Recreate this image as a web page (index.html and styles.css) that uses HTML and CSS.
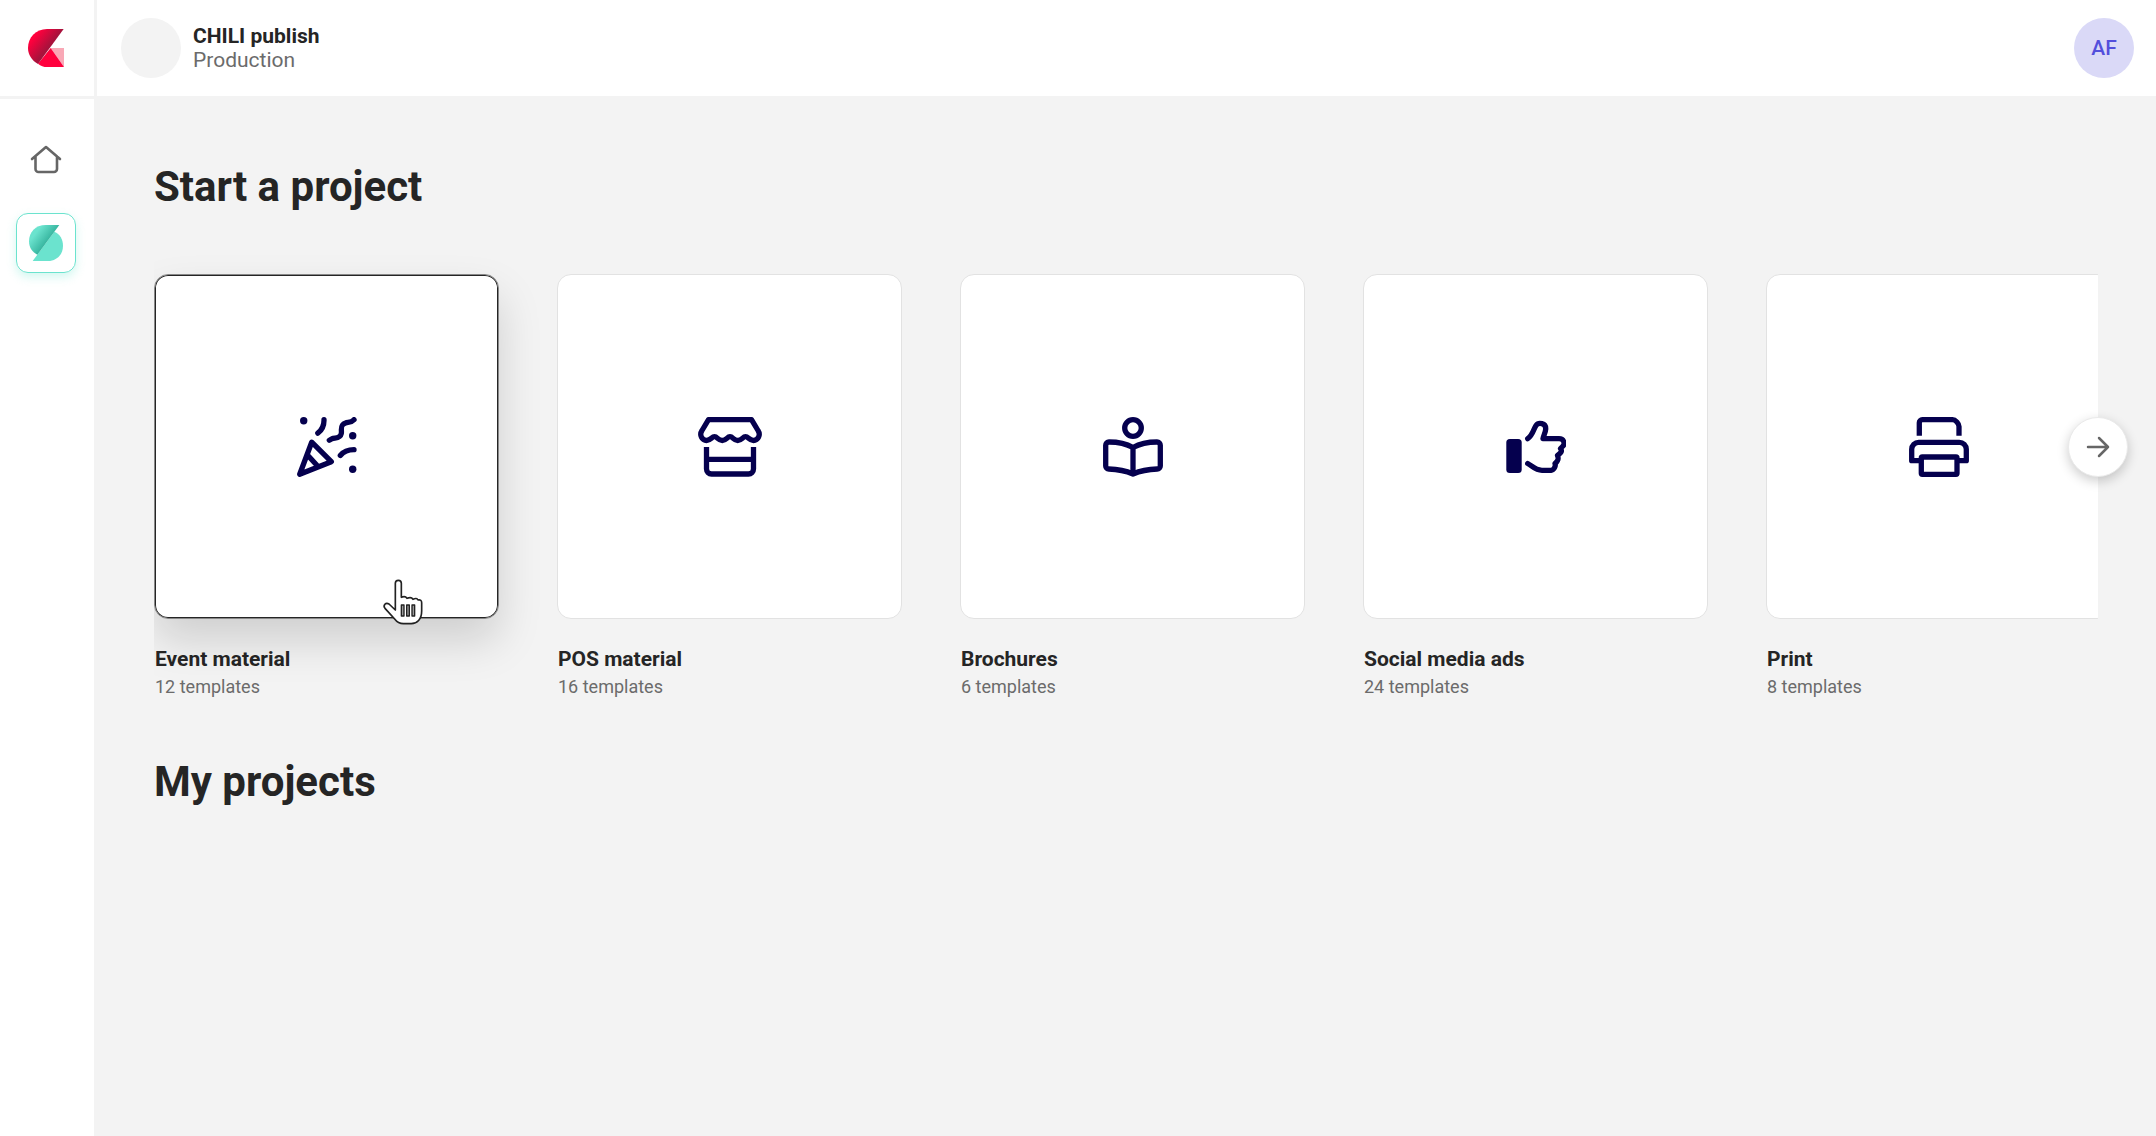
FILE: index.html
```html
<!DOCTYPE html>
<html lang="en">
<head>
<meta charset="utf-8">
<meta name="viewport" content="width=device-width, initial-scale=1">
<title>CHILI publish</title>
<link rel="stylesheet" href="styles.css">
</head>
<body>
<div class="app">
  <aside class="sidebar">
    <a class="brand" href="#" aria-label="CHILI publish">
      <svg width="36" height="38" viewBox="84 87 108 114">
        <defs><linearGradient id="red" gradientUnits="userSpaceOnUse" x1="102" y1="112" x2="142" y2="144"><stop offset="0" stop-color="#ff003d"/><stop offset="1" stop-color="#a8123c"/></linearGradient></defs>
        <path d="M152 144H192V201Z" fill="#f9a8b6"/>
        <path d="M114 191L152 144L192 201H141Q126 201 114 191Z" fill="#ff003d"/>
        <path d="M191 87H141C108 87 84 112 84 144C84 164 95 181 114 192Z" fill="url(#red)"/>
      </svg>
    </a>
    <nav class="nav">
      <a class="nav-item" href="#" aria-label="Home">
        <svg width="32" height="30" viewBox="0 0 32 30" fill="none" stroke="#666" stroke-width="2.6" stroke-linecap="round" stroke-linejoin="round"><path d="M2 15L16 3L30 15M5.5 12.5V25a3 3 0 0 0 3 3H24a3 3 0 0 0 3-3V12.500"/></svg>
      </a>
      <a class="nav-item active" href="#" aria-label="Studio">
        <svg width="34" height="36" viewBox="87 675 102 108">
          <defs><linearGradient id="teal" gradientUnits="userSpaceOnUse" x1="103" y1="705" x2="137" y2="731"><stop offset="0" stop-color="#6be3ce"/><stop offset="1" stop-color="#38b6a0"/></linearGradient></defs>
          <path d="M98 783L163 695C180 702 189 718 189 737C189 764 170 783 144 783Z" fill="#6be3ce"/>
          <path d="M178 675H137C106 675 87 697 87 724C87 742 96 756 112 764Z" fill="url(#teal)"/>
        </svg>
      </a>
    </nav>
  </aside>
  <div class="page">
    <header class="topbar">
      <span class="env-logo"></span>
      <div class="env"><strong class="env-name">CHILI publish</strong><span class="env-type">Production</span></div>
      <button class="avatar" type="button">AF</button>
    </header>
    <main class="content">
      <h1 class="title">Start a project</h1>
      <div class="carousel">
        <div class="track">
          <a class="card" href="#">
            <span class="thumb hovered">
              <svg class="icon" width="60" height="60" viewBox="0 0 60 60"><path d="M27 2.700C27.200 9 25 13 20.800 16.200M57 2.700C54 6 51 5 48.500 6C42.500 8 45 13 44.300 16.500C43.200 22 38 20.500 35 21.700L32.300 23.200M43.300 38.500C47 34 52 32.700 57 32.700M14.700 25.200L34.300 44.700L2.700 57.200ZM10.500 38L21 49.500"/><g class="fill"><circle cx="6.700" cy="3.700" r="3.700"/><circle cx="55.700" cy="18.700" r="3.700"/><circle cx="55.700" cy="52.300" r="3.700"/></g></svg>
              <svg class="cursor" width="70" height="70" viewBox="0 0 210 210"><path d="M76 135V55a9 9 0 0 1 18 0V97Q106 92 111 100Q124 94 129 103Q140 97 144 105Q155 103 155 113V138C155 163 141 176 124 176H100C88 176 80 170 74 162L45 130C38 121 47 111 57 117Z" fill="#fff" stroke="#222" stroke-width="5" stroke-linejoin="round"/><path d="M94 120h8v33h-8zM110 120h8v33h-8zM126 120h8v33h-8z" fill="#999" stroke="#222" stroke-width="4" stroke-linejoin="round"/></svg>
            </span>
            <strong class="name">Event material</strong><span class="count">12 templates</span>
          </a>
          <a class="card" href="#">
            <span class="thumb">
              <svg class="icon" width="64" height="60" viewBox="0 0 64 60"><path d="M10.500 2.700H53.500L60 13.500C63 18 60 23.500 55.500 23.500C51 23.500 50.500 19.700 47.500 19.700C44.500 19.700 44 23.500 39.700 23.500C35.500 23.500 35 19.700 32 19.700C29 19.700 28.500 23.500 24.300 23.500C20 23.500 19.500 19.700 16.500 19.700C13.500 19.700 13 23.500 8.500 23.500C4 23.500 1 18 4 13.500Z"/><path class="butt" d="M8.500 30V52a5 5 0 0 0 5 5H50.500a5 5 0 0 0 5-5V30M8.500 42.300H55.500"/></svg>
            </span>
            <strong class="name">POS material</strong><span class="count">16 templates</span>
          </a>
          <a class="card" href="#">
            <span class="thumb">
              <svg class="icon" width="60" height="60" viewBox="0 0 60 60"><circle cx="30" cy="11" r="8.300"/><path d="M30 30.500C22 26 15 25 6 25a3.300 3.300 0 0 0-3.300 3.300V49a3 3 0 0 0 3 3C15 52.300 22 53.500 30 57C38 53.500 45 52.300 54.300 52a3 3 0 0 0 3-3V28.300a3.300 3.300 0 0 0-3.300-3.300C45 25 38 26 30 30.500ZV57"/></svg>
            </span>
            <strong class="name">Brochures</strong><span class="count">6 templates</span>
          </a>
          <a class="card" href="#">
            <span class="thumb">
              <svg class="icon" width="60" height="60" viewBox="0 0 60 60"><rect class="fill" x="0.300" y="22" width="15.400" height="34" rx="3.500"/><path d="M21.700 21.700C27 18 27.500 12 30 8.500C32.500 5 40 6 39.700 12C39.500 16 37.500 18.500 37 21.700H53C58 21.700 59.500 27 56.500 29.500L54.500 31.500C56.500 34 55 36 51.500 38.500C53 42 52 44 49 46.500C50 49 48 53 45 53.300H36C29 53.300 26.500 49 21.700 46.500"/></svg>
            </span>
            <strong class="name">Social media ads</strong><span class="count">24 templates</span>
          </a>
          <a class="card" href="#">
            <span class="thumb">
              <svg class="icon" width="60" height="60" viewBox="0 0 60 60"><path class="butt" d="M10.300 18.800V5.700a3 3 0 0 1 3-3H43.500C46.500 2.700 50 6.500 50 9.500V18.800"/><path class="butt" d="M12 43.700H2.700V32.300a7 7 0 0 1 7-7H50.300a7 7 0 0 1 7 7V43.700H48"/><rect x="12.300" y="40" width="35.700" height="17.300" rx="1"/></svg>
            </span>
            <strong class="name">Print</strong><span class="count">8 templates</span>
          </a>
        </div>
        <button class="next" type="button" aria-label="Next"><svg width="24" height="22" viewBox="0 0 24 22" fill="none" stroke="#666" stroke-width="2.500" stroke-linecap="round" stroke-linejoin="round"><path d="M2 11H22M13 2L22 11L13 20"/></svg></button>
      </div>
      <h2 class="title">My projects</h2>
    </main>
  </div>
</div>
</body>
</html>
```
FILE: styles.css
```css
* { box-sizing: border-box; }
body { margin: 0; font-family: Roboto, sans-serif; color: #252525; background: #f3f3f3; }
a { color: inherit; text-decoration: none; }
button { font: inherit; border: 0; padding: 0; cursor: pointer; }
svg { display: block; }

.app { display: flex; min-height: 100vh; }
.sidebar { flex: none; width: 94px; background: #fff; }
.brand { display: flex; align-items: center; justify-content: center; height: 99px; padding-right: 2px; border-bottom: 3px solid #f3f3f3; }
.nav { display: flex; flex-direction: column; gap: 24px; padding: 30px 16px; }
.nav-item { display: flex; align-items: center; justify-content: center; width: 60px; height: 60px; border-radius: 12px; }
.nav-item.active { border: 1px solid #6be3ce; box-shadow: 0 4px 10px rgba(107, 227, 206, 0.3); }

.page { flex: 1; min-width: 0; }
.topbar { display: flex; align-items: center; gap: 12px; height: 96px; margin-left: 3px; padding: 0 22px 0 24px; background: #fff; }
.env-logo { width: 60px; height: 60px; border-radius: 50%; background: #f3f3f3; }
.env { display: flex; flex-direction: column; font-size: 21px; line-height: 24px; }
.env-type { color: #6b6b6b; }
.avatar { width: 60px; height: 60px; margin-left: auto; border-radius: 50%; background: #dad9f7; color: #534fdc; font-size: 21px; font-weight: 500; }

.content { padding: 65px 58px 58px 60px; }
.title { margin: 0; font-size: 42px; line-height: 52px; font-weight: 700; }
.carousel { position: relative; padding: 61px 0 55px; }
.track { display: flex; gap: 58px; overflow-x: clip; }
.card { flex: none; display: flex; flex-direction: column; width: 345px; }
.thumb { position: relative; display: flex; align-items: center; justify-content: center; height: 345px; margin-bottom: 26px; border: 1px solid #e2e2e2; border-radius: 14px; background: #fff; }
.thumb.hovered { border-color: #888; box-shadow: inset 0 0 0 1px #252525, 0 22px 44px rgba(0, 0, 0, 0.15); }
.name { padding-left: 1px; font-size: 21px; line-height: 28px; }
.count { padding-left: 1px; font-size: 18px; line-height: 28px; color: #6b6b6b; }
.icon { fill: none; stroke: #05004e; stroke-width: 5.3; stroke-linecap: round; stroke-linejoin: round; }
.icon .fill { fill: #05004e; stroke: none; }
.icon .butt { stroke-linecap: butt; }
.cursor { position: absolute; left: 215px; top: 290px; z-index: 1; }
.next { position: absolute; top: 204px; right: -30px; display: flex; align-items: center; justify-content: center; width: 60px; height: 60px; border: 1px solid #eaeaea; border-radius: 50%; background: #fff; box-shadow: 0 4px 12px rgba(0, 0, 0, 0.2); }
```
